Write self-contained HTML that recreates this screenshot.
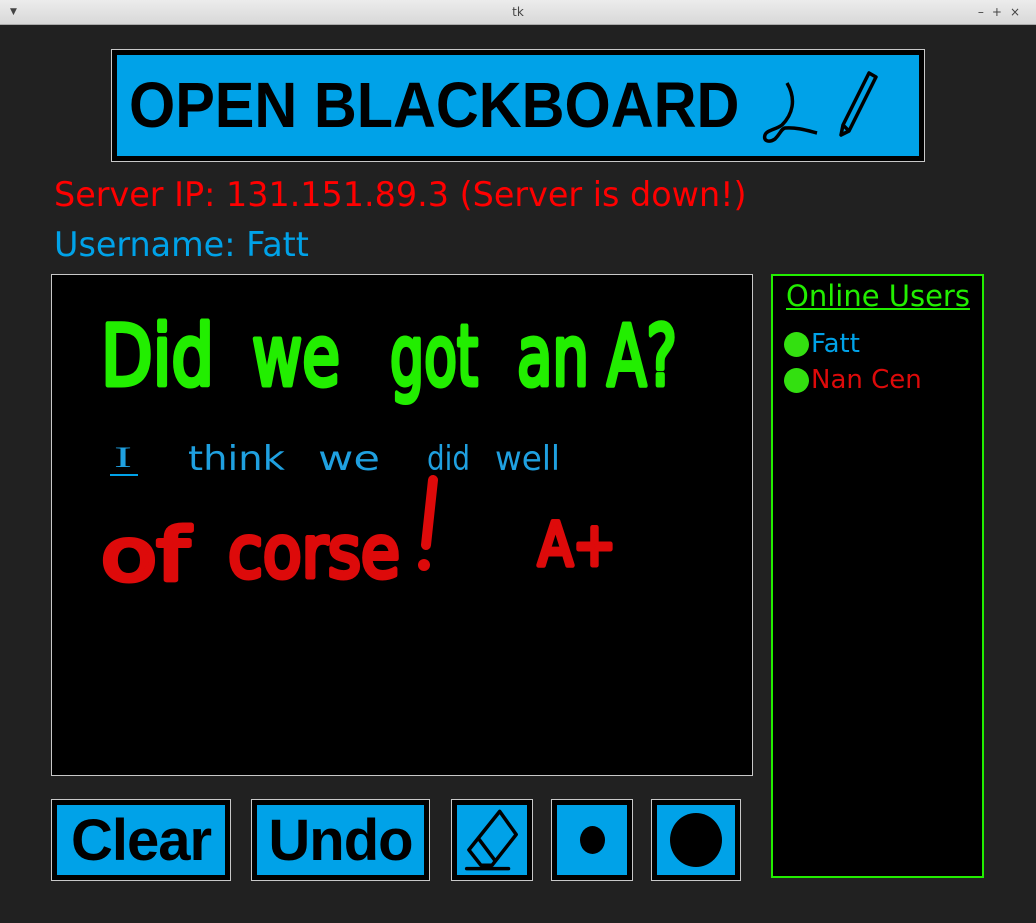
<!DOCTYPE html>
<html><head><style>
body{margin:0;width:1036px;height:923px;background:#212121;position:relative;overflow:hidden;font-family:"DejaVu Sans","Liberation Sans",sans-serif}
.tb{position:absolute;left:0;top:0;width:1036px;height:24px;background:linear-gradient(#ececec,#d8d8d8);border-bottom:1px solid #aaa;font-size:12px;color:#444;text-align:center;line-height:24px}
.abs{position:absolute;box-sizing:border-box;white-space:nowrap}
.btn{position:absolute;box-sizing:border-box;border:1px solid #c8c8c8;background:#000;padding:5px}
.btn div{width:100%;height:100%;background:#00a2e8;display:flex;align-items:center;justify-content:center;font-family:"Liberation Sans",sans-serif;font-weight:bold;color:#000}
</style></head><body>
<div class="tb">tk<span style="position:absolute;left:10px;font-size:9px">▼</span><span style="position:absolute;right:8px;letter-spacing:8px">–+×</span></div>
<div class="abs" style="left:111px;top:49px;width:814px;height:113px;border:1px solid #c8c8c8;background:#000;padding:5px">
 <div style="width:100%;height:100%;background:#00a2e8;position:relative">
  <div style="position:absolute;left:12px;top:14px;font-family:'Liberation Sans',sans-serif;font-weight:bold;font-size:64px;line-height:72px;color:#000;transform:scaleX(0.928);transform-origin:left">OPEN BLACKBOARD</div>
  <svg style="position:absolute;left:640px;top:10px" width="130" height="80" viewBox="0 0 130 80"><g fill="none" stroke="#000" stroke-width="3.5" stroke-linejoin="round"><path d="M30 18 C40 35 35 50 25 60 C18 65 10 65 8 70 C6 76 12 78 18 74 C24 68 24 64 28 63 C40 62 52 66 60 68"/><path d="M112 8 L119 12 L92 66 L84 70 L86 60 Z M86 60 L92 66"/></g></svg>
 </div>
</div>
<div class="abs" style="left:54px;top:174px;font-size:33.4px;color:#ff0000;line-height:42px">Server IP: 131.151.89.3 (Server is down!)</div>
<div class="abs" style="left:54px;top:224px;font-size:33.4px;color:#00a2e8;line-height:42px">Username: Fatt</div>
<div class="abs" style="left:51px;top:274px;width:702px;height:502px;border:1px solid #c8c8c8;background:#000">
<svg width="700" height="500" style="position:absolute;left:0;top:0">
 <g font-family="DejaVu Sans" fill="#22ee00" stroke="#22ee00" stroke-width="5" stroke-linejoin="round" font-size="84">
  <text x="49" y="110" textLength="113" lengthAdjust="spacingAndGlyphs">Did</text>
  <text x="200" y="110" textLength="88" lengthAdjust="spacingAndGlyphs">we</text>
  <text x="338" y="110" textLength="88" lengthAdjust="spacingAndGlyphs">got</text>
  <text x="465" y="110" textLength="72" lengthAdjust="spacingAndGlyphs">an</text>
  <text x="555" y="110" textLength="70" lengthAdjust="spacingAndGlyphs">A?</text>
 </g>
 <g font-family="DejaVu Sans" fill="#1fa0e0" font-size="34">
  <text x="136" y="195" textLength="97" lengthAdjust="spacingAndGlyphs">think</text>
  <text x="266" y="195" textLength="62" lengthAdjust="spacingAndGlyphs">we</text>
  <text x="375" y="195" textLength="43" lengthAdjust="spacingAndGlyphs">did</text>
  <text x="443" y="195" textLength="65" lengthAdjust="spacingAndGlyphs">well</text>
  <text x="62" y="192" font-family="Liberation Serif" font-size="30" textLength="18" lengthAdjust="spacingAndGlyphs">I</text>
 </g>
 <line x1="58" y1="200" x2="86" y2="200" stroke="#00a2e8" stroke-width="2"/>
 <g font-family="DejaVu Sans" fill="#dd0a0a" stroke="#dd0a0a" stroke-width="5" stroke-linejoin="round">
  <text x="49" y="305" font-size="72" textLength="88" lengthAdjust="spacingAndGlyphs">of</text>
  <text x="176" y="302" font-size="72" textLength="172" lengthAdjust="spacingAndGlyphs">corse</text>
  <text x="486" y="290" font-size="60" textLength="78" lengthAdjust="spacingAndGlyphs">A+</text>
 </g>
 <path d="M381 205 L374 270" stroke="#dd0a0a" stroke-width="10" stroke-linecap="round"/>
 <circle cx="372" cy="290" r="6" fill="#dd0a0a"/>
</svg>
</div>
<div class="abs" style="left:771px;top:274px;width:213px;height:604px;border:2px solid #22ee00;background:#000">
 <div style="position:absolute;left:13px;top:2px;font-size:29px;color:#22ee00;text-decoration:underline;line-height:36px">Online Users</div>
 <div style="position:absolute;left:11px;top:56px;width:25px;height:25px;border-radius:50%;background:#33e010"></div>
 <div style="position:absolute;left:38px;top:52px;font-size:26px;color:#00a2e8;line-height:32px">Fatt</div>
 <div style="position:absolute;left:11px;top:92px;width:25px;height:25px;border-radius:50%;background:#33e010"></div>
 <div style="position:absolute;left:38px;top:88px;font-size:26px;color:#dd0a0a;line-height:32px">Nan Cen</div>
</div>
<div class="btn" style="left:51px;top:799px;width:180px;height:82px"><div style="font-size:58px;letter-spacing:-1px">Clear</div></div>
<div class="btn" style="left:251px;top:799px;width:179px;height:82px"><div style="font-size:58px;letter-spacing:-1px">Undo</div></div>
<div class="btn" style="left:451px;top:799px;width:82px;height:82px"><div><svg width="66" height="66" viewBox="0 0 60 60"><g fill="none" stroke="#000" stroke-width="3.2" stroke-linejoin="round" stroke-linecap="round"><path d="M37 4 L52 25 L30 53 L20 53 L9 39 Z"/><path d="M18 29 L33 49"/><path d="M7 56 L45 56"/></g></svg></div></div>
<div class="btn" style="left:551px;top:799px;width:82px;height:82px"><div><div style="width:25px;height:28px;border-radius:50%;background:#000"></div></div></div>
<div class="btn" style="left:651px;top:799px;width:90px;height:82px"><div><div style="width:52px;height:54px;border-radius:50%;background:#000"></div></div></div>
</body></html>
